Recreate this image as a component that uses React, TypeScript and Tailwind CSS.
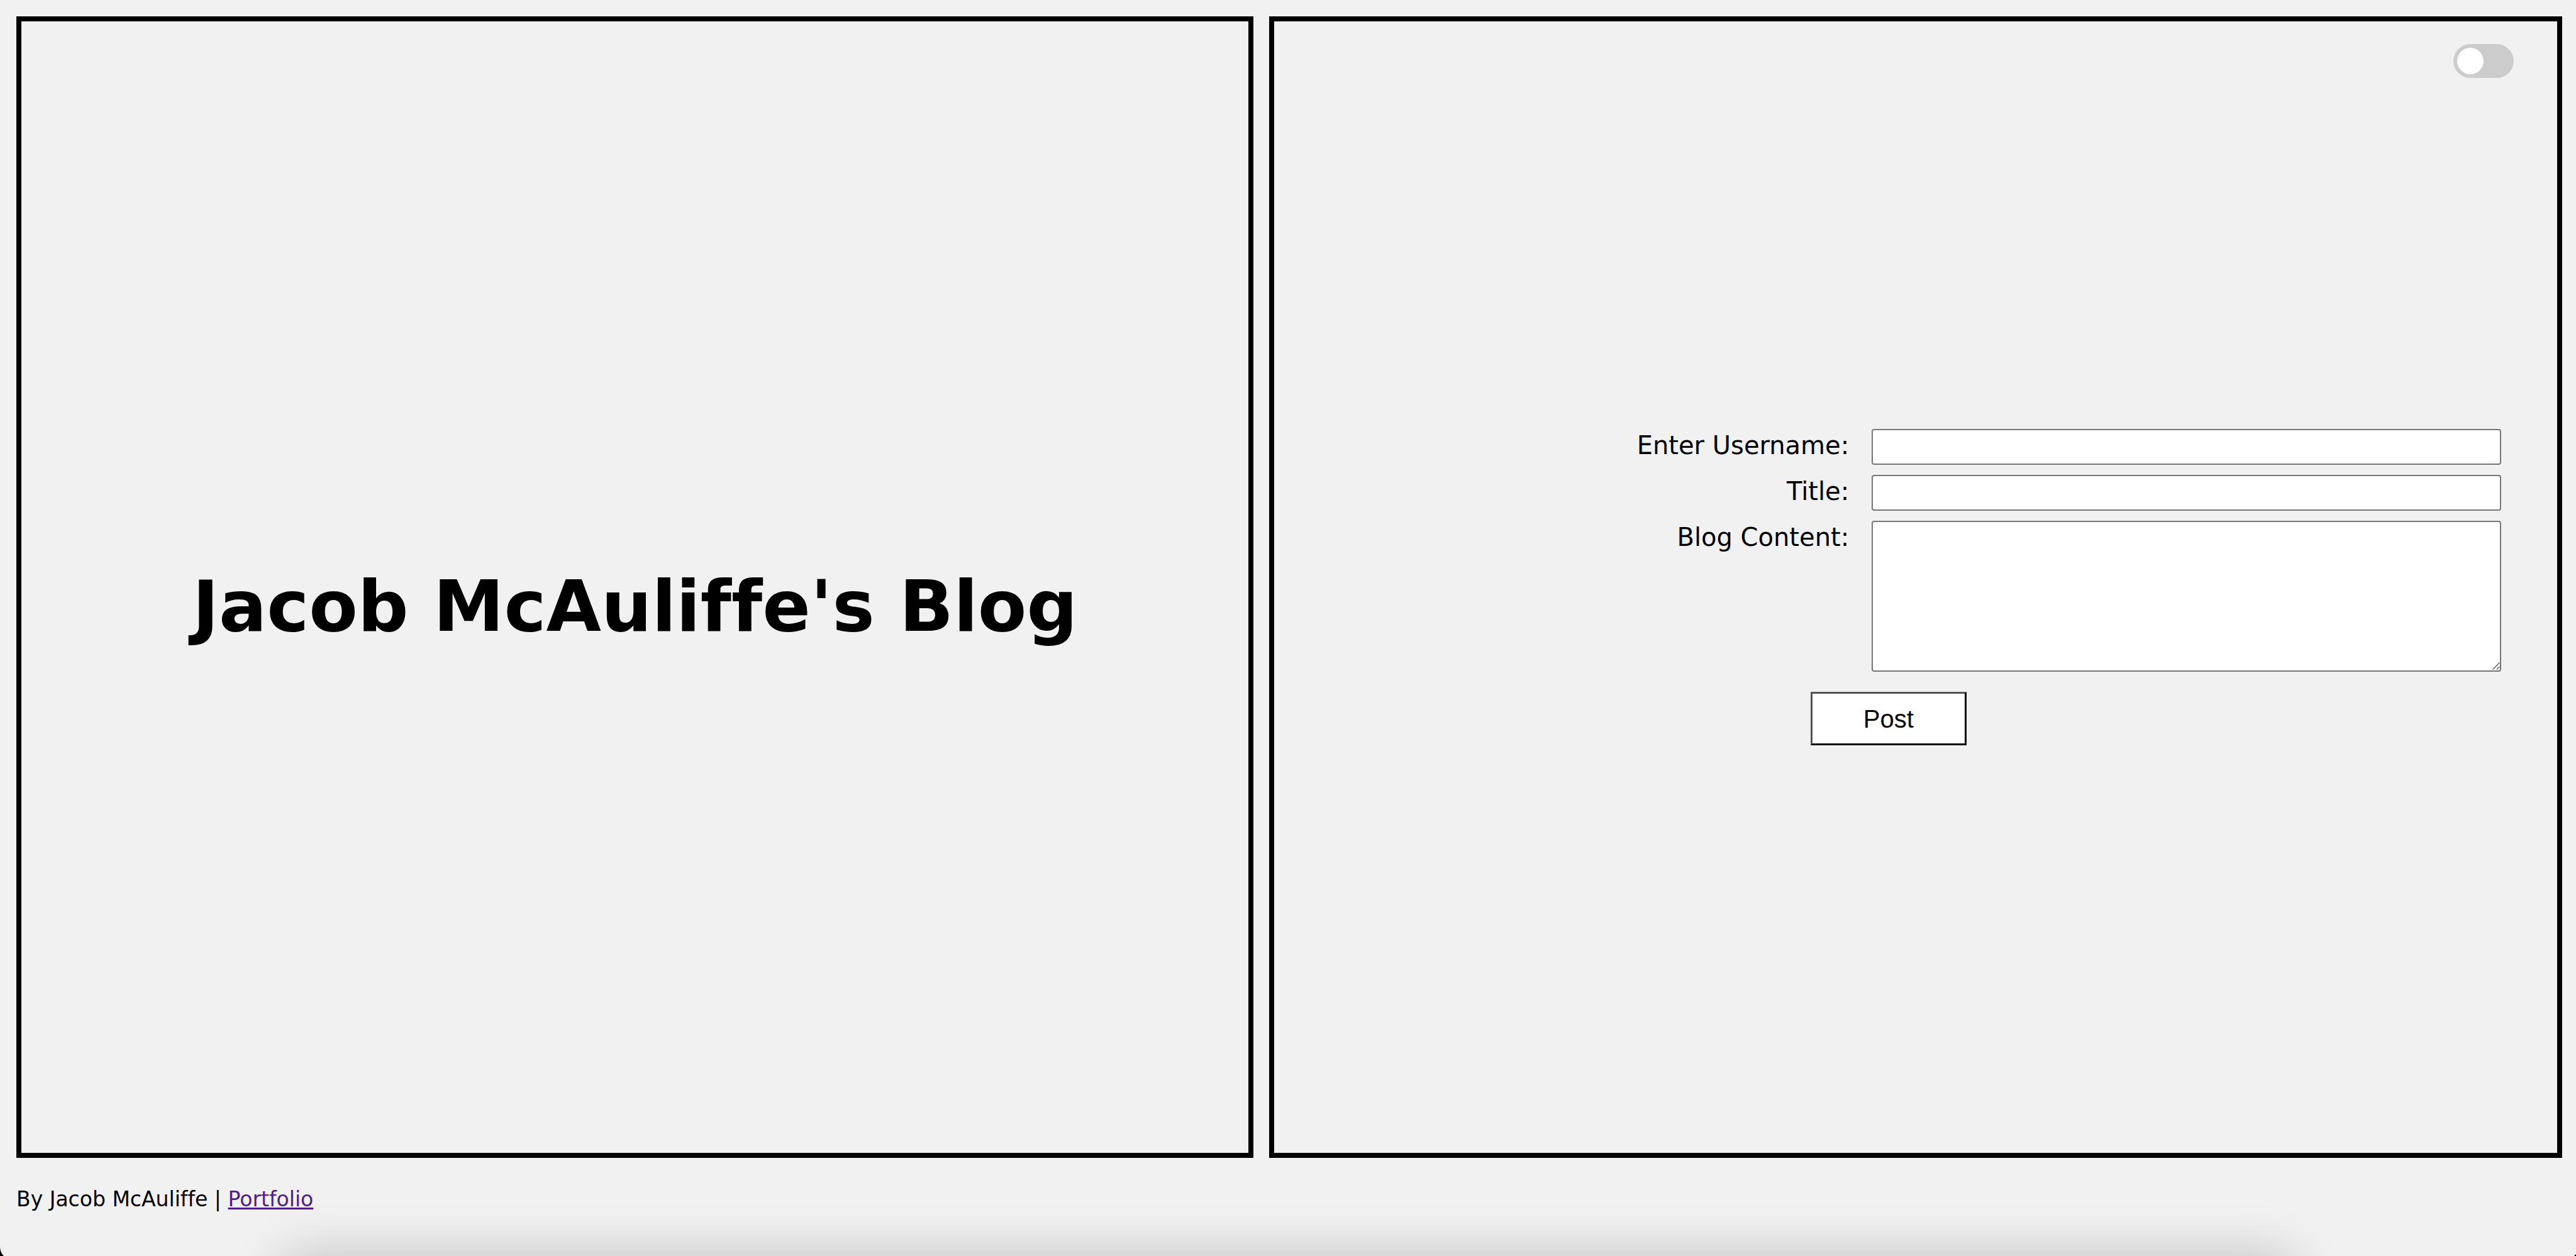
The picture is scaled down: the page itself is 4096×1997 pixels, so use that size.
import React from "react";

export default function App() {
  return (
    <div className="relative flex h-screen flex-col overflow-hidden bg-[#f1f1f1] p-[26px] pr-[22px] pb-0 font-['Verdana','DejaVu_Sans',sans-serif] text-black [font-variant-ligatures:none]">
      <div className="flex h-[90.9vh] shrink-0 gap-[25px]">
        <header className="flex w-[48.6%] shrink-0 flex-col items-center justify-center border-8 border-black pt-15">
          <h1 className="whitespace-nowrap text-[113px] leading-[136px] font-bold">Jacob McAuliffe's Blog</h1>
        </header>

        <main className="flex min-w-0 flex-1 flex-col border-8 border-black">
          <label className="mt-9 mr-[69px] flex h-[54px] w-24 items-center self-end rounded-full bg-[#ccc] p-1.5 has-checked:bg-[#2196f3]">
            <input type="checkbox" aria-label="Dark mode" className="peer sr-only" />
            <span className="size-[42px] rounded-full bg-white peer-checked:translate-x-[42px]" />
          </label>

          <form className="mt-[558px] mr-[89px] flex flex-col" onSubmit={(e) => e.preventDefault()}>
            <div className="grid grid-cols-[minmax(0,914fr)_minmax(0,1001fr)] gap-x-9 gap-y-4 text-right text-[40px] leading-[52px]">
              <label htmlFor="username">Enter Username:</label>
              <input id="username" type="text" className="h-[57px] w-full rounded-[4px] border-2 border-[#767676] bg-white px-1 text-left" />
              <label htmlFor="title">Title:</label>
              <input id="title" type="text" className="h-[57px] w-full rounded-[4px] border-2 border-[#767676] bg-white px-1 text-left" />
              <label htmlFor="content">Blog Content:</label>
              <div className="relative h-60">
                <textarea id="content" className="block size-full resize-none rounded-[4px] border-2 border-[#767676] bg-white px-1 text-left" />
                <svg className="pointer-events-none absolute right-[2px] bottom-[3px] size-3" viewBox="0 0 12 12" aria-hidden="true">
                  <path d="M0.5 11.5L11.5 0.5M7 11.5L11.5 7" stroke="#555" strokeWidth="1.3" />
                </svg>
              </div>
            </div>
            <button
              type="submit"
              className="mt-8 ml-[43.7%] h-[85px] w-[248px] border-[3px] border-t-[#545454] border-r-black border-b-black border-l-[#545454] bg-white font-['Liberation_Sans',sans-serif] text-[40px]"
            >
              Post
            </button>
          </form>
        </main>
      </div>

      <footer className="mt-[46px] text-[33px] leading-10">
        By Jacob McAuliffe |{" "}
        <a href="#portfolio" className="text-[#4e1f87] underline decoration-[3px]">
          Portfolio
        </a>
      </footer>

      <div className="pointer-events-none absolute top-full right-[10.9%] left-[10.9%] h-24 rounded-[40px] shadow-[0_0_84px_rgba(0,0,0,0.21)]" />
      <svg className="absolute bottom-0 left-0 h-4 w-3" viewBox="0 0 12 16" aria-hidden="true">
        <path d="M0 0C0 7 2 12 6 16H0Z" fill="black" />
      </svg>
      <svg className="absolute right-0 bottom-0 size-[3px]" viewBox="0 0 3 3" aria-hidden="true">
        <path d="M3 0L0 3H3Z" fill="black" />
      </svg>
    </div>
  );
}
